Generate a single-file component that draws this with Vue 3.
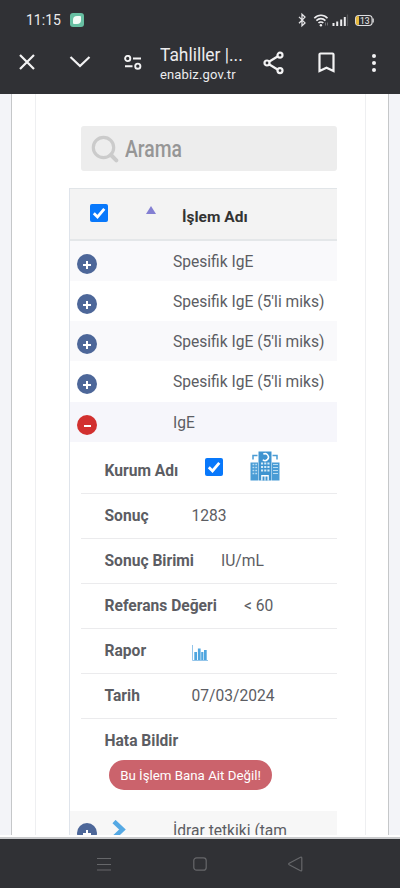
<script setup>
const rows = [
  { name: 'Spesifik IgE', tone: 'odd' },
  { name: "Spesifik IgE (5'li miks)", tone: 'even' },
  { name: "Spesifik IgE (5'li miks)", tone: 'odd' },
  { name: "Spesifik IgE (5'li miks)", tone: 'even tall' },
  { name: 'IgE', tone: 'active', open: true },
]
</script>

<template>
  <div class="phone">
    <header class="top">
      <div class="status">
        <span class="time">11:15</span>
        <span class="app-dot"><i></i></span>
        <svg class="status-icons" width="80" height="16" viewBox="0 0 80 16" fill="none">
          <path d="M1.500 4.700l6 6-3 2.800V2l3 2.900-6 6.200" stroke="#e4e4e6" stroke-width="1.300" transform="translate(.5 .2)" />
          <g stroke="#ececee" stroke-width="1.600">
            <path d="M17.300 6.200c3.800-4 9.600-4 13.200 0" />
            <path d="M19.400 8.600c2.600-2.700 6.400-2.700 9 0" />
            <path d="M21.500 11c1.300-1.400 3.500-1.400 4.800 0" />
          </g>
          <circle cx="23.900" cy="13.200" r="1.200" fill="#ececee" />
          <path d="M28.500 10.500v3m2-3v3" stroke="#6c6d70" stroke-width="1" />
          <path d="M38 11v3M41.700 9.500V14M45.700 7.500V14M49.300 5v9" transform="translate(-1.500)" stroke="#ececee" stroke-width="2" />
          <path d="M50.500 2.500V14" stroke="#56575a" stroke-width="1.200" />
          <rect x="58.600" y="3.500" width="16.500" height="10" rx="3.200" stroke="#dedee0" stroke-width="1.200" />
          <path d="M61.500 4.500v8h-.6a1.500 1.500 0 0 1-1.500-1.500V6a1.500 1.500 0 0 1 1.500-1.500z" fill="#e9bb3e" stroke="#e9bb3e" />
          <path d="M76.200 6.500V10.500" stroke="#dedee0" stroke-width="1.200" />
          <text x="63" y="11.600" font-family="Roboto, sans-serif" font-size="8.500" fill="#f0f0f0">13</text>
        </svg>
      </div>
      <div class="toolbar">
        <svg class="i-close" width="18" height="18" viewBox="0 0 18 18"><path d="M2 2l14 14M16 2L2 16" /></svg>
        <svg class="i-down" width="22" height="14" viewBox="0 0 22 14"><path d="M1.500 2l9.500 9 9.500-9" /></svg>
        <svg class="i-tune" width="18" height="16" viewBox="0 0 18 16"><circle cx="3.700" cy="3.500" r="2.600" /><path d="M9 3.500h8M1 11.200h7.500" /><circle cx="13.800" cy="11.200" r="2.600" /></svg>
        <div class="site">
          <div class="title">Tahliller |...</div>
          <div class="host">enabiz.gov.tr</div>
        </div>
        <svg class="i-share" width="22" height="24" viewBox="0 0 22 24"><path d="M6 10.700l8.500-5.200M6 13.300l8.500 5.200" /><circle cx="4" cy="12" r="2.500" /><circle cx="17" cy="4.200" r="2.500" /><circle cx="17" cy="19.600" r="2.500" /></svg>
        <svg class="i-mark" width="17" height="21" viewBox="0 0 17 21"><path d="M1.500 2.500a1 1 0 0 1 1-1h12a1 1 0 0 1 1 1V19l-7-3.200L1.500 19z" /></svg>
        <span class="more"><i></i><i></i><i></i></span>
      </div>
    </header>

    <main class="page">
      <div class="sheet">
        <div class="panel">
          <div class="search">
            <svg width="28" height="28" viewBox="0 0 28 28" fill="none"><circle cx="12.500" cy="12.500" r="10.200" stroke="#cbcbcb" stroke-width="3.200" /><path d="M20 20l5.300 5.300" stroke="#cbcbcb" stroke-width="4" stroke-linecap="round" /></svg>
            <span>Arama</span>
          </div>

          <div class="table">
            <div class="thead">
              <span class="check"><svg viewBox="0 0 18 18"><path d="M3.800 9.200l3.700 3.800L14.300 4.800" /></svg></span>
              <i class="sort"></i>
              <b>İşlem Adı</b>
            </div>

            <div v-for="(row, i) in rows" :key="i" class="row" :class="row.tone">
              <span class="toggle" :class="{ minus: row.open }"></span>
              <span class="name">{{ row.name }}</span>
            </div>

            <div class="details">
              <div class="detail first">
                <b>Kurum Adı</b>
                <span class="check"><svg viewBox="0 0 18 18"><path d="M3.800 9.200l3.700 3.800L14.300 4.800" /></svg></span>
                <svg class="hospital" width="30" height="30" viewBox="0 0 30 30">
                  <path d="M.5 11.500h7.500v18H.5zM22 11.500h7.500v18H22z" fill="#4a9cd5" />
                  <path d="M8.500 .5h13v29h-13z" fill="#3f94d0" />
                  <path d="M3 8.500V4.500h4.500M27 8.500V4.500h-4.500" fill="none" stroke="#4a9cd5" stroke-width="1.500" />
                  <path d="M13.300 3.200A3.400 3.400 0 1 1 12.800 8.700" fill="none" stroke="#fff" stroke-width="1.500" />
                  <path d="M11 12.500h8.500M11 16h8.500M11 19.500h8.500" stroke="#d4eaf7" stroke-width="2" stroke-dasharray="2.100 1.100" />
                  <path d="M2.500 13.500h5M2.500 16.500h5M2.500 19.500h5M2.500 22.500h5" stroke="#b9dcf2" stroke-width="1.300" stroke-dasharray="1.800 1" />
                  <path d="M23 13.500h5M23 16.500h5M23 19.500h5M23 22.500h5" stroke="#b9dcf2" stroke-width="1.200" />
                  <path d="M11.200 29.500V24h7.600v5.500" fill="#fff" />
                  <path d="M12.500 29.500V25.500h2v4zm3 0v-4h2v4z" fill="#3f94d0" />
                </svg>
              </div>
              <div class="detail"><b>Sonuç</b><span class="val">1283</span></div>
              <div class="detail"><b>Sonuç Birimi</b><span class="val">IU/mL</span></div>
              <div class="detail"><b>Referans Değeri</b><span class="val">&lt; 60</span></div>
              <div class="detail">
                <b>Rapor</b>
                <svg class="chart" width="16" height="16" viewBox="0 0 16 16"><path d="M.5 0v15.500H16" fill="none" stroke="#93c5ea" /><path d="M2.300 7h2.700v8H2.300zM5.900 3.500h2.700V15H5.900zM9.200 7h2.200v8H9.200zM12 5h2.700v10H12z" fill="#4fa6df" /></svg>
              </div>
              <div class="detail"><b>Tarih</b><span class="val">07/03/2024</span></div>
              <div class="report">
                <b>Hata Bildir</b>
                <button>Bu İşlem Bana Ait Değil!</button>
              </div>
            </div>

            <div class="row last">
              <span class="toggle"></span>
              <svg class="chev" width="14" height="18" viewBox="0 0 14 18"><path d="M2 1.500l8.500 8L2 17.500" fill="none" stroke="#55a9e4" stroke-width="4.500" /></svg>
              <span class="name">İdrar tetkiki (tam</span>
            </div>
          </div>
        </div>
      </div>
    </main>
    <div class="edge"></div>

    <nav class="nav">
      <svg width="14" height="14" viewBox="0 0 14 14"><path d="M0 1.500h14M0 7.500h14M0 13h14" /></svg>
      <svg width="14" height="14" viewBox="0 0 14 14"><rect x=".8" y=".8" width="12.400" height="12.400" rx="2.800" /></svg>
      <svg width="15" height="16" viewBox="0 0 15 16"><path d="M1.200 7.300L12.500 1.200q1.300-.5 1.300 1v11.600q0 1.500-1.300 1L1.200 8.700q-1-.7 0-1.400z" /></svg>
    </nav>
  </div>
</template>

<style>
body { margin: 0; overflow: hidden; }
</style>

<style scoped>
.phone { width: 400px; height: 888px; display: flex; flex-direction: column; overflow: hidden; background: #fff; font-family: Roboto, sans-serif; color: #5c5d63; }
.phone * { box-sizing: border-box; }
svg { display: block; flex: none; }
b { font-weight: 700; white-space: nowrap; }
.top { height: 94px; flex: none; background: #303135; color: #ececee; }
.status { height: 40px; display: flex; align-items: center; padding-left: 26px; }
.time { width: 44px; font-size: 14px; line-height: 16px; }
.app-dot { width: 14px; height: 14px; border-radius: 3px; background: #67bfa2; display: grid; place-items: center; }
.app-dot i { width: 8px; height: 8px; background: #f2fbf6; border-radius: 4px 1px 4px 1px; }
.status-icons { margin-left: 213px; margin-top: -1px; }
.toolbar { height: 54px; display: flex; align-items: center; padding: 0 0 9px 18px; }
.toolbar svg { fill: none; stroke: #f3f3f4; stroke-width: 2.2; }
.i-close { margin-top: -1px; }
.i-down { margin-left: 33px; margin-top: -1px; }
.i-tune { margin-left: 33px; }
.toolbar .i-tune { stroke-width: 1.9; }
.site { width: 103px; margin-left: 18px; white-space: nowrap; }
.title { font-size: 19px; line-height: 21px; margin-top: 1px; transform: scaleX(.915); transform-origin: left; }
.host { font-size: 13px; line-height: 17px; letter-spacing: .15px; margin-top: 1px; }
.i-mark { margin-left: 33px; }
.more { display: grid; gap: 3px; margin-left: 37px; }
.more i { width: 4px; height: 4px; border-radius: 50%; background: #f3f3f4; }

.page { height: 741px; flex: none; overflow: hidden; padding: 0 11px; background: #f3f4f8; }
.sheet { height: 741px; border: solid #c5c7c9; border-width: 0 1px; padding: 0 22px 0 23px; background: #fff; }
.panel { height: 741px; border: solid #eeeff1; border-width: 0 1px; padding: 32px 28px 0 33px; }
.search { height: 45px; margin-left: 12px; display: flex; align-items: center; padding-left: 10px; border-radius: 3px; background: #ededed; color: #969696; }
.search span { margin: 1px 0 0 6px; font-size: 23px; line-height: 27px; font-weight: 500; transform: scaleX(.84); transform-origin: left; }
.table { margin-top: 17px; border-left: 1px solid #dfe4eb; }
.thead { height: 53px; display: flex; align-items: center; border-top: 1px solid #e1e5e8; border-bottom: 2px solid #e4e7e9; background: #f3f3f3; padding-left: 20px; color: #333; font-size: 15.500px; }
.check { width: 18px; height: 18px; flex: none; border-radius: 2px; background: #0878fb; }
.check path { fill: none; stroke: #fff; stroke-width: 2.8; }
.thead .check { margin-bottom: 3px; }
.sort { margin: 0 0 8px 38px; border: solid transparent; border-width: 0 5px 8px; border-bottom-color: #837fd2; }
.thead b { margin: 5px 0 0 26px; }
.row { height: 40px; display: flex; align-items: center; padding-left: 7px; background: #fff; font-size: 15.600px; white-space: nowrap; }
.odd { background: #f9f9fb; }
.tall { height: 41px; }
.active { background: #f6f6fb; }
.toggle { position: relative; width: 20px; height: 20px; flex: none; margin-top: 5px; border-radius: 50%; background: #4d6799; }
.toggle::before, .toggle::after { content: ''; position: absolute; left: 6px; top: 10px; width: 8px; height: 2px; background: #fff; }
.toggle::after { left: 9px; top: 7px; width: 2px; height: 8px; }
.toggle.minus { background: #d2302f; }
.toggle.minus::before { left: 7px; width: 7px; }
.toggle.minus::after { display: none; }
.name { margin: 2px 0 0 76px; line-height: 20px; }
.tall .name { margin-top: 0; }
.details { height: 369px; padding-left: 11px; background: #fff; font-size: 15.600px; }
.detail { height: 45px; display: flex; align-items: center; border-bottom: 1px solid #ebebed; padding-left: 23.500px; }
.detail.first { height: 52px; }
.detail.first b { width: 100.500px; margin-top: 6px; }
.detail.first .check { margin-top: -2px; }
.hospital { margin: -4px 0 0 26.500px; }
.val { margin-left: 27px; white-space: nowrap; }
.detail:not(.first) b { min-width: 60px; }
.chart { margin: 3px 0 0 27px; }
.report { padding: 12px 0 0 23.500px; display: flex; flex-direction: column; align-items: flex-start; }
.report b { line-height: 20px; }
button { height: 30px; width: 163px; margin: 9px 0 0 4.500px; padding: 0; border: 0; border-radius: 15px; background: #cb636c; color: #fff; font: 13.300px Roboto, sans-serif; white-space: nowrap; }
.last { background: #f7f7f7; }
.last .toggle { margin-top: 4px; }
.chev { margin: -4px 0 0 15px; }
.last .name { margin: 0 0 0 47px; }
.edge { height: 4px; flex: none; background: #fff; border-bottom: 2px solid #c9cacc; }
.nav { height: 49px; display: flex; align-items: center; justify-content: space-between; padding: 0 97px 0 97px; background: #303135; }
.nav svg { fill: none; stroke: #66676a; stroke-width: 1.2; }
</style>
